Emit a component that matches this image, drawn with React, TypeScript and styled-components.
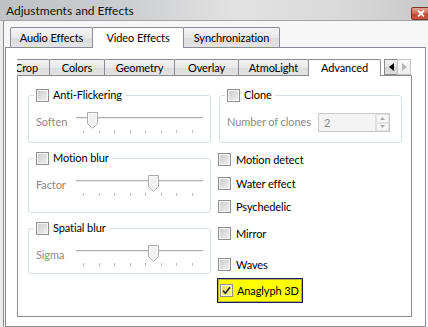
import styled, { createGlobalStyle } from "styled-components";

const GlobalStyle = createGlobalStyle`
  html, body {
    margin: 0;
    padding: 0;
  }
  body {
    font-family: Lato, "Liberation Sans", sans-serif;
    font-size: 11px;
    letter-spacing: -0.1px;
    color: #000;
  }
  #root {
    width: 428px;
    height: 327px;
    overflow: hidden;
  }
`;

const Window = styled.div`
  width: 428px;
  height: 327px;
  display: flex;
  flex-direction: column;
  overflow: hidden;
  background: #ececec;
`;

const TitleBar = styled.div`
  height: 20px;
  flex: none;
  display: flex;
  align-items: flex-start;
  justify-content: space-between;
  padding-left: 6px;
  background: linear-gradient(
    90deg,
    #bfc1c4 0%,
    #cdced0 30%,
    #e2e2e2 55%,
    #dadada 78%,
    #c9c9c9 100%
  );
  border-bottom: 1px solid #a3a3a3;
`;

const Title = styled.span`
  line-height: 21px;
  font-size: 12px;
  letter-spacing: 0;
  color: #111;
`;

const CloseButton = styled.div`
  width: 18px;
  height: 11px;
  margin-top: 7px;
  margin-right: -3px;
  border: 1px solid #7b362a;
  border-radius: 2px;
  background: linear-gradient(#e6a797, #cf6450 50%, #bd432d 51%, #c9563f);
  display: flex;
  align-items: center;
  justify-content: center;
`;

const Body = styled.div`
  flex: 1;
  display: flex;
  padding-left: 3px;
  min-height: 0;
`;

const Client = styled.div`
  flex: 1;
  display: flex;
  flex-direction: column;
  border-left: 1px solid #8c8c8c;
  background: #f7f7f7;
  padding-left: 1px;
  min-height: 0;
`;

const TabWidget = styled.div`
  width: 421px;
  margin-top: 3px;
  display: flex;
  flex-direction: column;
  flex: 1;
  min-height: 0;
`;

const TabBar = styled.div`
  display: flex;
  align-items: flex-end;
  height: 23px;
  padding-left: 5px;
  flex: none;
`;

const Tab = styled.div<{ $active?: boolean; $w: number; $h: number }>`
  box-sizing: border-box;
  width: ${(p) => p.$w}px;
  height: ${(p) => (p.$active ? p.$h + 1 : p.$h)}px;
  margin-right: -1px;
  margin-bottom: ${(p) => (p.$active ? -1 : 0)}px;
  flex: none;
  position: relative;
  z-index: ${(p) => (p.$active ? 1 : 0)};
  border: 1px solid #898c95;
  border-bottom: none;
  border-radius: 2px 2px 0 0;
  background: ${(p) =>
    p.$active
      ? "#fff"
      : "linear-gradient(#f3f3f3, #e9e9e9 50%, #dcdcdc 51%, #e3e3e3)"};
  display: flex;
  align-items: center;
  justify-content: center;
  white-space: nowrap;
  padding-bottom: ${(p) => (p.$active ? 1 : 0)}px;
`;

const Pane = styled.div`
  flex: 1;
  border: 1px solid #898c95;
  background: #fff;
  padding: 9px 0 0 11px;
  min-height: 0;
`;

const InnerWidget = styled.div`
  width: 395px;
  display: flex;
  flex-direction: column;
`;

const InnerTabBar = styled.div`
  display: flex;
  align-items: flex-start;
  height: 18px;
`;

const TabScroller = styled.div`
  width: 366px;
  height: 18px;
  flex: none;
  display: flex;
  align-items: flex-end;
  clip-path: inset(-4px 0 -2px 0);
  position: relative;
  z-index: 1;
`;

const ScrollButtons = styled.div`
  display: flex;
  margin-top: 2px;
  margin-left: 1px;
`;

const ScrollButton = styled.div<{ $disabled?: boolean }>`
  width: 14px;
  height: 16px;
  box-sizing: border-box;
  border: 1px solid ${(p) => (p.$disabled ? "#c4c4c4" : "#8a8a8a")};
  margin-right: -1px;
  background: ${(p) =>
    p.$disabled
      ? "linear-gradient(#fafafa, #ededed)"
      : "linear-gradient(#f2f2f2, #e2e2e2 50%, #d2d2d2 51%, #dedede)"};
  display: flex;
  align-items: center;
  justify-content: center;
`;

const InnerPane = styled.div`
  height: 242px;
  box-sizing: border-box;
  border: 1px solid #898c95;
  background: #fff;
  padding: 12px 10px 0;
  display: grid;
  grid-template-columns: 183px 183px;
  column-gap: 8px;
  align-items: start;
`;

const Column = styled.div`
  display: flex;
  flex-direction: column;
`;

const LeftColumn = styled(Column)`
  gap: 8px;
`;

const Group = styled.fieldset<{ $h: number }>`
  margin: 0;
  box-sizing: border-box;
  height: ${(p) => p.$h}px;
  min-width: 0;
  padding: 10px 5px 0;
  border: 1px solid #d5dfe5;
  border-radius: 3px;
`;

const Legend = styled.legend`
  padding: 0 3px 0 2px;
  display: flex;
  align-items: center;
  gap: 4px;
  height: 14px;
  line-height: 14px;
`;

const Box = styled.span<{ $checked?: boolean }>`
  width: 13px;
  height: 13px;
  box-sizing: border-box;
  flex: none;
  border: 1px solid #8e8f8f;
  background: ${(p) =>
    p.$checked
      ? "linear-gradient(135deg, #e4e45a, #f6f68c)"
      : "linear-gradient(135deg, #c9c9c9 0%, #e0e0e0 55%, #f3f3f3 100%)"};
  box-shadow: inset 0 0 0 1px #f5f5f5;
  display: flex;
  align-items: center;
  justify-content: center;
`;

const Row = styled.div`
  display: flex;
  align-items: flex-start;
`;

const DimLabel = styled.span<{ $w?: number }>`
  color: #8a8a8a;
  line-height: 16px;
  padding-left: 2px;
  margin-top: 2px;
  flex: none;
  width: ${(p) => (p.$w ? `${p.$w}px` : "auto")};
`;

const Slider = styled.div`
  position: relative;
  flex: 1;
  height: 24px;
  margin-right: 2px;
`;

const Track = styled.div`
  margin-top: 5px;
  height: 1px;
  border-top: 1px solid #b2b2b2;
  background: #e9e9e9;
`;

const Ticks = styled.div`
  display: flex;
  justify-content: space-between;
  padding: 0 10px 0 7px;
  margin-top: 11px;
`;

const Tick = styled.span`
  width: 1px;
  height: 3px;
  background: #bdbdbd;
`;

const Thumb = styled.svg`
  position: absolute;
  top: 0;
  margin-left: -5px;
`;

const SpinBox = styled.div`
  width: 72px;
  height: 19px;
  box-sizing: border-box;
  margin: 1px 6px 0 auto;
  border: 1px solid #c9c9c9;
  background: #f4f4f4;
  display: flex;
`;

const SpinValue = styled.span`
  flex: 1;
  color: #8a8a8a;
  line-height: 17px;
  padding-left: 5px;
`;

const SpinArrows = styled.div`
  width: 13px;
  display: flex;
  flex-direction: column;
  border-left: 1px solid #dedede;
`;

const SpinArrow = styled.div`
  flex: 1;
  display: flex;
  align-items: center;
  justify-content: center;
  border: 1px solid #e2e2e2;
  background: #f6f6f6;
`;

const CheckRow = styled.div<{ $mt: number }>`
  display: flex;
  align-items: center;
  gap: 5px;
  height: 16px;
  margin-top: ${(p) => p.$mt}px;
  margin-left: -1px;
`;

const Highlight = styled.div`
  align-self: flex-start;
  display: flex;
  align-items: center;
  gap: 4px;
  height: 25px;
  box-sizing: border-box;
  margin: 6px 0 0 -2px;
  padding: 0 3px 0 2px;
  background: #ffff00;
  border: 1px solid #16166c;
  box-shadow: inset 0 0 0 1px rgba(40, 40, 130, 0.35);
`;

const outerTabs = [
  { label: "Audio Effects", w: 83 },
  { label: "Video Effects", w: 92, active: true },
  { label: "Synchronization", w: 97 },
];

const innerTabs = [
  { label: "Crop", w: 47 },
  { label: "Colors", w: 56 },
  { label: "Geometry", w: 71 },
  { label: "Overlay", w: 65 },
  { label: "AtmoLight", w: 71 },
  { label: "Advanced", w: 73, active: true },
];

const sliders = [
  { title: "Anti-Flickering", label: "Soften", value: 0.125, h: 55 },
  { title: "Motion blur", label: "Factor", value: 0.61, h: 62 },
  { title: "Spatial blur", label: "Sigma", value: 0.61, h: 53 },
];

const checks = [
  { label: "Motion detect", mt: 8 },
  { label: "Water effect", mt: 8 },
  { label: "Psychedelic", mt: 7 },
  { label: "Mirror", mt: 11 },
  { label: "Waves", mt: 15 },
];

function Check({ checked }: { checked?: boolean }) {
  return (
    <Box $checked={checked}>
      {checked ? (
        <svg width="9" height="9" viewBox="0 0 9 9">
          <path
            d="M1 4.6 L3.4 7.2 L8 1.2"
            fill="none"
            stroke="#2a2a2a"
            strokeWidth="1.6"
          />
        </svg>
      ) : null}
    </Box>
  );
}

function TrackSlider({ value }: { value: number }) {
  return (
    <Slider>
      <Track />
      <Ticks>
        {Array.from({ length: 8 }).map((_, i) => (
          <Tick key={i} />
        ))}
      </Ticks>
      <Thumb
        width="11"
        height="17"
        viewBox="0 0 11 17"
        style={{ left: `${value * 100}%` }}
      >
        <path
          d="M0.5 0.5 H10.5 V11.5 L5.5 16.3 L0.5 11.5 Z"
          fill="#f1f1f1"
          stroke="#a9a9a9"
        />
        <path d="M1.5 1.5 H9.5 V11 L5.5 15 L1.5 11 Z" fill="none" stroke="#fbfbfb" />
      </Thumb>
    </Slider>
  );
}

export default function App() {
  return (
    <>
      <GlobalStyle />
      <Window>
        <TitleBar>
          <Title>Adjustments and Effects</Title>
          <CloseButton>
            <svg width="8" height="7" viewBox="0 0 8 7">
              <path d="M1 0.5 L7 6.5 M7 0.5 L1 6.5" stroke="#fff" strokeWidth="1.8" />
            </svg>
          </CloseButton>
        </TitleBar>
        <Body>
          <Client>
            <TabWidget>
              <TabBar>
                {outerTabs.map((t) => (
                  <Tab key={t.label} $w={t.w} $h={20} $active={t.active}>
                    {t.label}
                  </Tab>
                ))}
              </TabBar>
              <Pane>
                <InnerWidget>
                  <InnerTabBar>
                    <TabScroller>
                      {innerTabs.map((t, i) => (
                        <Tab
                          key={t.label}
                          $w={t.w}
                          $h={16}
                          $active={t.active}
                          style={i === 0 ? { marginLeft: -14 } : undefined}
                        >
                          {t.label}
                        </Tab>
                      ))}
                    </TabScroller>
                    <ScrollButtons>
                      <ScrollButton>
                        <svg width="5" height="8" viewBox="0 0 5 8">
                          <path d="M5 0 V8 L0 4 Z" fill="#000" />
                        </svg>
                      </ScrollButton>
                      <ScrollButton $disabled>
                        <svg width="5" height="8" viewBox="0 0 5 8">
                          <path d="M0 0 V8 L5 4 Z" fill="#b8b8b8" />
                        </svg>
                      </ScrollButton>
                    </ScrollButtons>
                  </InnerTabBar>
                  <InnerPane>
                    <LeftColumn>
                      {sliders.map((s) => (
                        <Group key={s.title} $h={s.h}>
                          <Legend>
                            <Check />
                            {s.title}
                          </Legend>
                          <Row>
                            <DimLabel $w={40}>{s.label}</DimLabel>
                            <TrackSlider value={s.value} />
                          </Row>
                        </Group>
                      ))}
                    </LeftColumn>
                    <Column>
                      <Group $h={55}>
                        <Legend>
                          <Check />
                          Clone
                        </Legend>
                        <Row>
                          <DimLabel>Number of clones</DimLabel>
                          <SpinBox>
                            <SpinValue>2</SpinValue>
                            <SpinArrows>
                              <SpinArrow>
                                <svg width="5" height="3" viewBox="0 0 5 3">
                                  <path d="M0 3 H5 L2.5 0 Z" fill="#a8a8a8" />
                                </svg>
                              </SpinArrow>
                              <SpinArrow>
                                <svg width="5" height="3" viewBox="0 0 5 3">
                                  <path d="M0 0 H5 L2.5 3 Z" fill="#a8a8a8" />
                                </svg>
                              </SpinArrow>
                            </SpinArrows>
                          </SpinBox>
                        </Row>
                      </Group>
                      {checks.map((c) => (
                        <CheckRow key={c.label} $mt={c.mt}>
                          <Check />
                          {c.label}
                        </CheckRow>
                      ))}
                      <Highlight>
                        <Check checked />
                        Anaglyph 3D
                      </Highlight>
                    </Column>
                  </InnerPane>
                </InnerWidget>
              </Pane>
            </TabWidget>
          </Client>
        </Body>
      </Window>
    </>
  );
}
